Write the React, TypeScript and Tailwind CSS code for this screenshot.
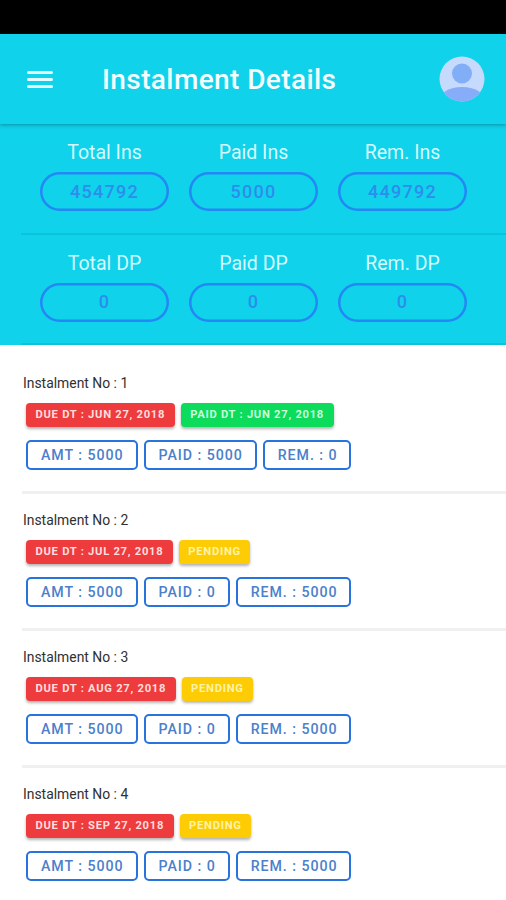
import { useState } from "react";

// --- DATA ---
const totals = [
  [
    { label: "Total Ins", value: "454792" },
    { label: "Paid Ins", value: "5000" },
    { label: "Rem. Ins", value: "449792" },
  ],
  [
    { label: "Total DP", value: "0" },
    { label: "Paid DP", value: "0" },
    { label: "Rem. DP", value: "0" },
  ],
];

type Instalment = {
  no: number;
  due: string;
  paidOn?: string;
  amount: number;
  paid: number;
  remaining: number;
};

const instalments: Instalment[] = [
  { no: 1, due: "Jun 27, 2018", paidOn: "Jun 27, 2018", amount: 5000, paid: 5000, remaining: 0 },
  { no: 2, due: "Jul 27, 2018", amount: 5000, paid: 0, remaining: 5000 },
  { no: 3, due: "Aug 27, 2018", amount: 5000, paid: 0, remaining: 5000 },
  { no: 4, due: "Sep 27, 2018", amount: 5000, paid: 0, remaining: 5000 },
];

function Header({ onMenu }: { onMenu: () => void }) {
  return (
    <header className="relative z-10 flex h-[90px] shrink-0 items-center bg-[#10d2ea] pl-[27px] pr-[21px] shadow-[0_1px_4px_rgba(0,60,80,0.45)]">
      <button onClick={onMenu} className="flex w-[26px] flex-col gap-[4px]" aria-label="Menu">
        <span className="h-[3px] w-full rounded-full bg-[#e2fcff]" />
        <span className="h-[3px] w-full rounded-full bg-[#e2fcff]" />
        <span className="h-[3px] w-full rounded-full bg-[#e2fcff]" />
      </button>
      <h1 className="ml-[49px] flex-1 whitespace-nowrap pt-[2px] text-[28px] font-medium leading-none tracking-[0.4px] text-[#f2feff]">
        Instalment Details
      </h1>
      <svg className="h-[46px] w-[46px]" viewBox="0 0 46 46">
        <clipPath id="avatar">
          <circle cx="23" cy="23" r="22.5" />
        </clipPath>
        <g clipPath="url(#avatar)">
          <rect width="46" height="46" fill="#c5dafc" />
          <circle cx="23" cy="17.5" r="10" fill="#82aef8" />
          <ellipse cx="23" cy="45" rx="23" ry="14" fill="#87adf9" />
        </g>
      </svg>
    </header>
  );
}

function DateBadge({ children, className }: { children: React.ReactNode; className: string }) {
  return (
    <span
      className={`flex h-[24px] items-center whitespace-nowrap rounded-[4px] px-[9.5px] text-[11.2px] font-bold uppercase leading-none tracking-[0.73px] shadow-[0_2px_3px_rgba(0,0,0,0.3)] ${className}`}
    >
      {children}
    </span>
  );
}

function AmountBox({ children }: { children: React.ReactNode }) {
  return (
    <span className="flex h-[30px] items-center whitespace-nowrap rounded-[5px] border-2 border-[#2873dc] pl-[13px] pr-[12px] pt-px text-[14.2px] font-medium leading-none tracking-[0.95px] text-[#4b80cb]">
      {children}
    </span>
  );
}

export default function App() {
  const [, setMenuOpen] = useState(false);

  return (
    <div className="flex h-[900px] w-full flex-col overflow-hidden bg-white font-[Roboto,sans-serif]">
      {/* status bar */}
      <div className="h-[34px] shrink-0 bg-black" />

      <Header onMenu={() => setMenuOpen((open) => !open)} />

      {/* totals */}
      <section className="h-[221px] shrink-0 bg-[#10d2ea] pl-[21px]">
        {totals.map((row, i) => (
          <div key={i} className="h-[110.5px] border-b-2 border-[#0cc4da] pl-[19px] pr-[39px] pt-[17px]">
            <div className="grid grid-cols-3 gap-[20px]">
              {row.map((item) => (
                <div key={item.label} className="flex flex-col items-center">
                  <span className="text-[19.5px] leading-[24px] text-[#d5faff]">{item.label}</span>
                  <span className="mt-[7px] flex h-[39px] w-full items-center justify-center rounded-full text-[18px] font-medium leading-none tracking-[1.3px] text-[#2b8eed] shadow-[inset_0_0_0_2.5px_#2388f5]">
                    {item.value}
                  </span>
                </div>
              ))}
            </div>
          </div>
        ))}
      </section>

      {/* instalment list */}
      <main className="flex flex-col pl-[22px] pt-[12px]">
        {instalments.map((item) => (
          <div key={item.no} className="h-[137px] shrink-0 border-b-[3px] border-[#f0f0f0] pt-[16.5px]">
            <p className="pl-[1px] text-[13.9px] leading-[18px] text-[#303030]">Instalment No : {item.no}</p>
            <div className="ml-[4px] mt-[11px] flex gap-[6px]">
              <DateBadge className="bg-[#ee3c3e] text-[#ffdedd]">Due Dt : {item.due}</DateBadge>
              {item.paidOn ? (
                <DateBadge className="bg-[#0cdb5b] text-[#c9ffda]">Paid Dt : {item.paidOn}</DateBadge>
              ) : (
                <DateBadge className="bg-[#fdcc05] text-[#fff3a5]">Pending</DateBadge>
              )}
            </div>
            <div className="ml-[4px] mt-[13px] flex gap-[6px]">
              <AmountBox>AMT : {item.amount}</AmountBox>
              <AmountBox>PAID : {item.paid}</AmountBox>
              <AmountBox>REM. : {item.remaining}</AmountBox>
            </div>
          </div>
        ))}
      </main>
    </div>
  );
}
